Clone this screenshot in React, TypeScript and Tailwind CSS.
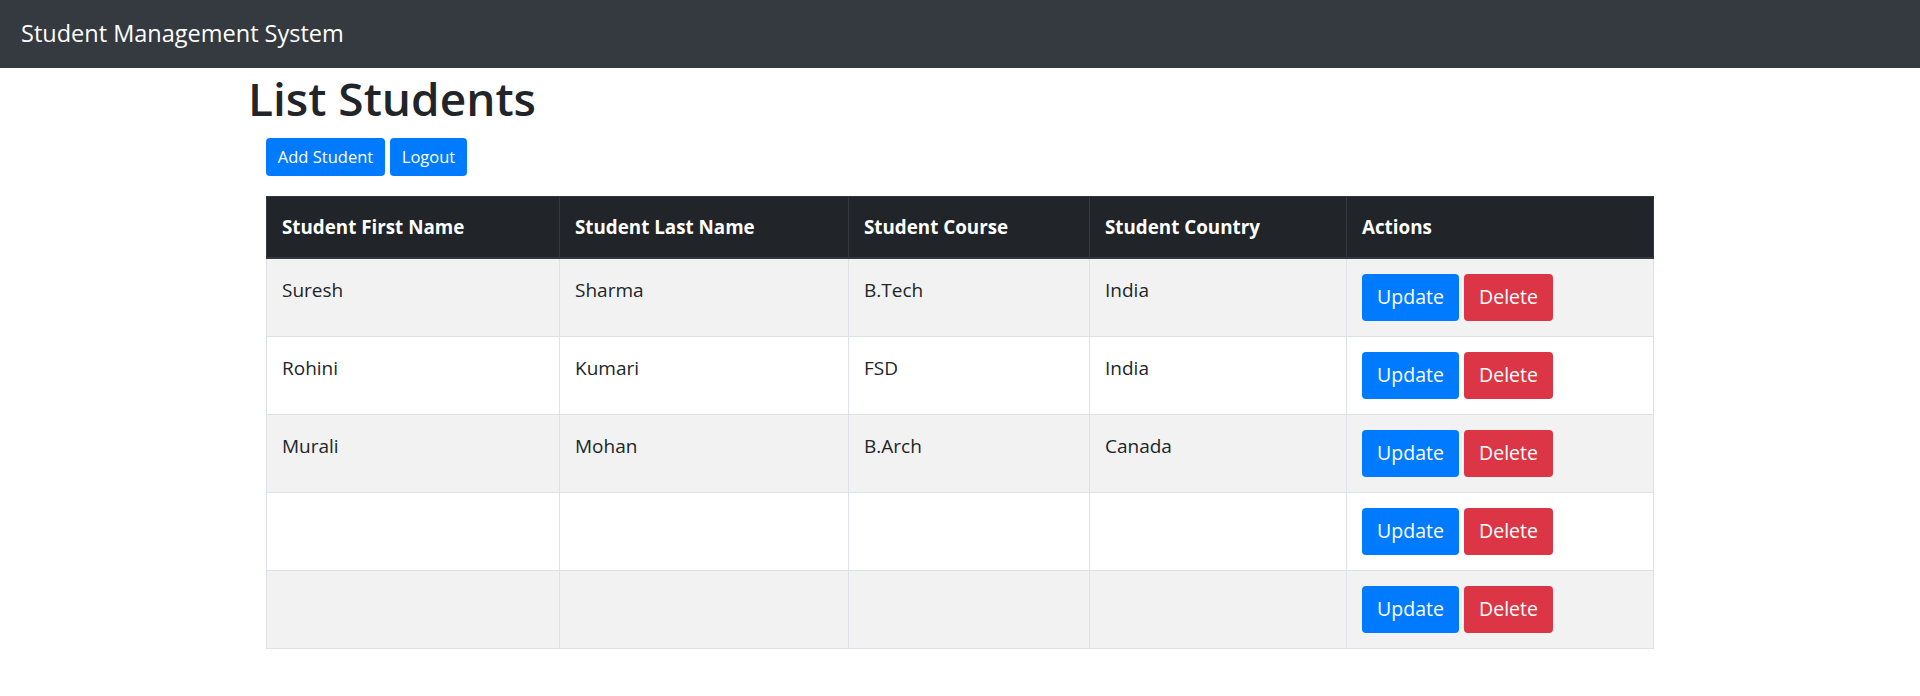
import React from 'react';

type Student = { first: string; last: string; course: string; country: string };

const students: Student[] = [
  { first: 'Suresh', last: 'Sharma', course: 'B.Tech', country: 'India' },
  { first: 'Rohini', last: 'Kumari', course: 'FSD', country: 'India' },
  { first: 'Murali', last: 'Mohan', course: 'B.Arch', country: 'Canada' },
  { first: '', last: '', course: '', country: '' },
  { first: '', last: '', course: '', country: '' },
];

const font = { fontFamily: '"Open Sans", "Liberation Sans", sans-serif' };

export default function App() {
  return (
    <div className="min-h-[696px] bg-white text-[#212529]" style={font}>
      <nav className="h-[68px] bg-[#343a40] flex items-center px-[21px]">
        <span className="text-white text-[23.5px] leading-none">Student Management System</span>
      </nav>

      <div className="pl-[248px]">
        <h1 className="text-[46px] leading-[60px] font-semibold mb-[10px]">List Students</h1>
      </div>

      <div className="pl-[266px]">
        <div className="flex gap-[5px] mb-[20px]">
          <button className="h-[38px] w-[119px] rounded-[4px] bg-[#007bff] text-white text-[16.5px]">Add Student</button>
          <button className="h-[38px] w-[77px] rounded-[4px] bg-[#007bff] text-white text-[16.5px]">Logout</button>
        </div>

        <table className="w-[1387px] table-fixed border-collapse border border-[#dee2e6]">
          <thead>
            <tr className="bg-[#212529] text-white text-left">
              <th className="w-[293px] h-[61px] px-[15px] border border-b-2 border-[#32383e] text-[18.8px] font-bold">Student First Name</th>
              <th className="w-[289px] px-[15px] border border-b-2 border-[#32383e] text-[18.8px] font-bold">Student Last Name</th>
              <th className="w-[241px] px-[15px] border border-b-2 border-[#32383e] text-[18.8px] font-bold">Student Course</th>
              <th className="w-[257px] px-[15px] border border-b-2 border-[#32383e] text-[18.8px] font-bold">Student Country</th>
              <th className="w-[307px] px-[15px] border border-b-2 border-[#32383e] text-[18.8px] font-bold">Actions</th>
            </tr>
          </thead>
          <tbody className="text-[19px]">
            {students.map((s, i) => (
              <tr key={i} className={i % 2 === 0 ? 'bg-[#f2f2f2]' : 'bg-white'}>
                <td className="pt-[16px] pb-[15px] px-[15px] align-top border border-[#dee2e6] leading-[30px]">{s.first}</td>
                <td className="pt-[16px] pb-[15px] px-[15px] align-top border border-[#dee2e6] leading-[30px]">{s.last}</td>
                <td className="pt-[16px] pb-[15px] px-[15px] align-top border border-[#dee2e6] leading-[30px]">{s.course}</td>
                <td className="pt-[16px] pb-[15px] px-[15px] align-top border border-[#dee2e6] leading-[30px]">{s.country}</td>
                <td className="p-[15px] align-top border border-[#dee2e6]">
                  <div className="flex gap-[5px]">
                    <button className="h-[47px] w-[97px] rounded-[4px] bg-[#007bff] text-white text-[19.5px]">Update</button>
                    <button className="h-[47px] w-[89px] rounded-[4px] bg-[#dc3545] text-white text-[19.5px]">Delete</button>
                  </div>
                </td>
              </tr>
            ))}
          </tbody>
        </table>
      </div>
    </div>
  );
}
